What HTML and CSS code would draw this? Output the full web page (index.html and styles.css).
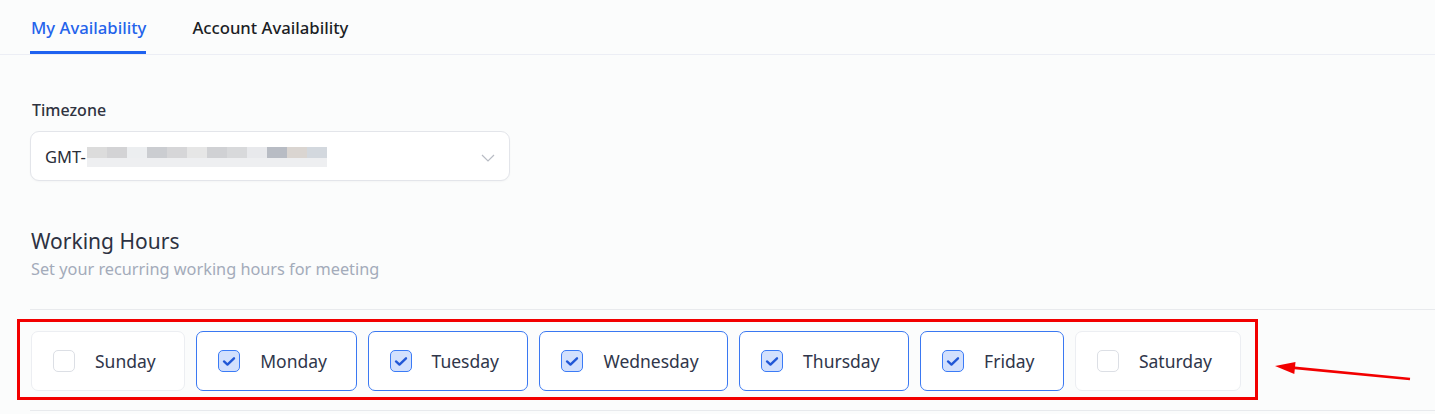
FILE: index.html
```html
<!DOCTYPE html>
<html>
<head>
<meta charset="utf-8">
<link rel="stylesheet" href="styles.css">
</head>
<body>
<div class="page">
  <nav class="tabs">
    <div class="tab active">My Availability</div>
    <div class="tab">Account Availability</div>
  </nav>

  <section class="field">
    <label class="label">Timezone</label>
    <div class="select">
      <span class="select-value">GMT-<span class="blur"><i style="background:#dcdcdc"></i><i style="background:#d3d3d5"></i><i style="background:#eceef0"></i><i style="background:#cbcdd1"></i><i style="background:#d6d6d8"></i><i style="background:#e6e6e6"></i><i style="background:#d0d1d4"></i><i style="background:#d8d9db"></i><i style="background:#e8e9ec"></i><i style="background:#b8bcc4"></i><i style="background:#dad5d1"></i><i style="background:#d3d8de"></i></span></span>
      <svg class="chev" width="14" height="8" viewBox="0 0 14 8"><path d="M1 1l6 6 6-6" fill="none" stroke="#b8bcc4" stroke-width="1.2"/></svg>
    </div>
  </section>

  <section class="hours">
    <h2 class="title">Working Hours</h2>
    <p class="subtitle">Set your recurring working hours for meeting</p>
  </section>

  <div class="days-wrap">
    <div class="days">
      <div class="day"><span class="box"></span><span class="name">Sunday</span></div>
      <div class="day on"><span class="box"><svg viewBox="0 0 22 22"><path d="M5.5 11.5l3.8 3.4L16.5 8" fill="none" stroke="#2157d6" stroke-width="2.6" stroke-linecap="round" stroke-linejoin="round"/></svg></span><span class="name">Monday</span></div>
      <div class="day on"><span class="box"><svg viewBox="0 0 22 22"><path d="M5.5 11.5l3.8 3.4L16.5 8" fill="none" stroke="#2157d6" stroke-width="2.6" stroke-linecap="round" stroke-linejoin="round"/></svg></span><span class="name">Tuesday</span></div>
      <div class="day on"><span class="box"><svg viewBox="0 0 22 22"><path d="M5.5 11.5l3.8 3.4L16.5 8" fill="none" stroke="#2157d6" stroke-width="2.6" stroke-linecap="round" stroke-linejoin="round"/></svg></span><span class="name">Wednesday</span></div>
      <div class="day on"><span class="box"><svg viewBox="0 0 22 22"><path d="M5.5 11.5l3.8 3.4L16.5 8" fill="none" stroke="#2157d6" stroke-width="2.6" stroke-linecap="round" stroke-linejoin="round"/></svg></span><span class="name">Thursday</span></div>
      <div class="day on"><span class="box"><svg viewBox="0 0 22 22"><path d="M5.5 11.5l3.8 3.4L16.5 8" fill="none" stroke="#2157d6" stroke-width="2.6" stroke-linecap="round" stroke-linejoin="round"/></svg></span><span class="name">Friday</span></div>
      <div class="day"><span class="box"></span><span class="name">Saturday</span></div>
    </div>
    <div class="highlight"></div>
    <svg class="arrow" width="150" height="24" viewBox="0 0 150 24"><path d="M22 6.6L140 18" stroke="#f20000" stroke-width="2.6"/><path d="M5 5L25.5 0.95L24.3 12.9z" fill="#f20000"/></svg>
  </div>
</div>
</body>
</html>
```
FILE: styles.css
```css
* { box-sizing: border-box; }
html, body { margin: 0; padding: 0; }
body {
  background: #fbfcfc;
  font-family: "Noto Sans", "Open Sans", sans-serif;
  color: #2f3443;
  height: 414px;
  overflow: hidden;
}
.page { padding-left: 30px; }

.tabs {
  display: flex;
  gap: 45px;
  height: 55px;
  border-bottom: 1px solid #eceef5;
  margin-left: -30px;
  padding-left: 30px;
}
.tab {
  font-size: 16.7px;
  font-weight: 500;
  color: #1b1e26;
  padding-top: 16px;
  padding-left: 1px;
  height: 54px;
}
.tab.active {
  color: #2463eb;
  border-bottom: 3px solid #1f62f0;
  padding-left: 1px;
}

.field { padding-top: 44px; }
.label {
  display: block;
  font-size: 16px;
  font-weight: 500;
  color: #2f3340;
  line-height: 22px;
  padding-left: 2px;
}
.select {
  margin-top: 10px;
  width: 480px;
  height: 50px;
  background: #fff;
  border: 1px solid #e3e5ea;
  border-radius: 9px;
  display: flex;
  align-items: center;
  justify-content: space-between;
  padding: 0 14px 0 14px;
  box-shadow: 0 1px 2px rgba(0,0,0,0.03);
}
.select-value {
  font-size: 16.5px;
  color: #2a2e38;
  display: flex;
  align-items: center;
}
.blur {
  display: flex;
  height: 20px;
  margin-left: 1px;
  margin-top: 2px;
  background: #eeeff1;
}
.blur i { display: block; width: 20px; height: 11px; }
.chev { margin-top: 4px; }

.hours { padding-top: 46px; }
.title {
  margin: 0;
  font-size: 21px;
  font-weight: 400;
  color: #2d3242;
  line-height: 28px;
  padding-left: 1px;
}
.subtitle {
  margin: 3px 0 0;
  font-size: 16.3px;
  color: #a3abba;
  line-height: 22px;
  padding-left: 1px;
}

.days-wrap {
  position: relative;
  margin-top: 29px;
  border-top: 1px solid #e8eaed;
  border-bottom: 1px solid #e8eaed;
  padding: 21px 0 19px 1px;
}
.days { display: flex; gap: 11px; }
.day {
  height: 60px;
  display: flex;
  align-items: center;
  gap: 20px;
  padding: 0 28.5px 0 21px;
  background: #fff;
  border: 1px solid #eceef2;
  border-radius: 7px;
}
.day.on { border-color: #3a78f2; }
.box {
  width: 22px;
  height: 22px;
  border: 1px solid #dcdfe5;
  border-radius: 5px;
  background: #fff;
  display: block;
}
.box svg { display: block; width: 20px; height: 20px; }
.day.on .box { background: #d2e0fd; border-color: #3b7bf6; }
.name { font-size: 17.5px; color: #30364a; }

.highlight {
  position: absolute;
  left: -13px;
  top: 9px;
  width: 1241px;
  height: 81px;
  border: 3px solid #f20000;
  pointer-events: none;
}
.arrow {
  position: absolute;
  left: 1240px;
  top: 51px;
}
```
